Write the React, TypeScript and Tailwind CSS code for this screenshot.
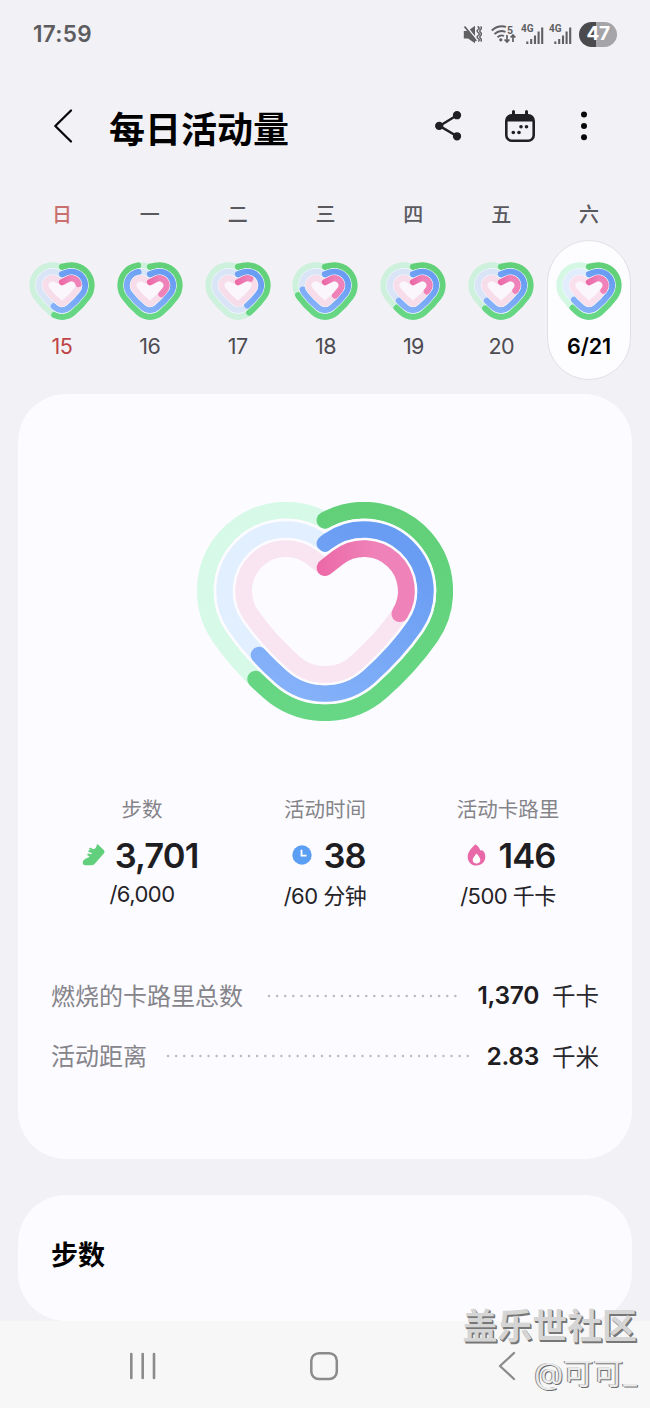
import React from "react";

type Geometry = {
  width: number;
  height: number;
  lobeDx: number;
  lobeY: number;
  tipY: number;
  stroke: number;
  rings: { r: number; tipR: number; startY: number }[];
};

const LARGE: Geometry = {
  width: 256,
  height: 219.4,
  lobeDx: 39,
  lobeY: 89,
  tipY: 125.7,
  stroke: 16.8,
  rings: [
    { r: 80.7, tipR: 85, startY: 18.3 },
    { r: 61.3, tipR: 65.7, startY: 41.5 },
    { r: 42.4, tipR: 46.8, startY: 65.7 },
  ],
};

const SMALL: Geometry = {
  width: 66,
  height: 58.4,
  lobeDx: 9.5,
  lobeY: 23.3,
  tipY: 37.8,
  stroke: 6.2,
  rings: [
    { r: 20, tipR: 17, startY: 4.9 },
    { r: 13.5, tipR: 10.3, startY: 12.3 },
    { r: 7.1, tipR: 3.8, startY: 20.2 },
  ],
};

// Closed heart: two lobe arcs and a rounded tip joined by slightly bowed sides.
function heartPath(g: Geometry, index: number) {
  const { r, tipR, startY } = g.rings[index];
  const cx = g.width / 2;
  const lx = g.lobeDx;
  const d = Math.hypot(lx, startY - g.lobeY);
  const startAngle = Math.atan2(startY - g.lobeY, -lx) + (d > r ? Math.acos(r / d) : 0);
  const ax = lx + r * Math.cos(startAngle);
  const ay = g.lobeY + r * Math.sin(startAngle);
  const vy = g.tipY - g.lobeY;
  const dist = Math.hypot(lx, vy);
  const theta = Math.atan2(vy, -lx) - Math.acos((r - tipR) / dist);
  const t0 = theta - 0.13;
  const t1 = theta + 0.11;
  const bx = lx + r * Math.cos(t0);
  const by = g.lobeY + r * Math.sin(t0);
  const tx = tipR * Math.cos(t1);
  const ty = g.tipY + tipR * Math.sin(t1);
  const h = Math.hypot(bx - tx, by - ty) * 0.34;
  const c0x = bx - h * Math.sin(t0);
  const c0y = by + h * Math.cos(t0);
  const c1x = tx + h * Math.sin(t1);
  const c1y = ty - h * Math.cos(t1);
  return [
    `M${cx} ${startY}`,
    `L${cx + ax} ${ay}`,
    `A${r} ${r} 0 0 1 ${cx + bx} ${by}`,
    `C${cx + c0x} ${c0y} ${cx + c1x} ${c1y} ${cx + tx} ${ty}`,
    `A${tipR} ${tipR} 0 0 1 ${cx - tx} ${ty}`,
    `C${cx - c1x} ${c1y} ${cx - c0x} ${c0y} ${cx - bx} ${by}`,
    `A${r} ${r} 0 0 1 ${cx - ax} ${ay}`,
    "Z",
  ].join(" ");
}

const LARGE_TRACKS = ["#d7f9e7", "#e2effe", "#f8e5f1"];
const SMALL_TRACKS = ["#cdf1dc", "#dae4f7", "#f7dce9"];
const SELECTED_TRACKS = ["#d5f8e4", "#e1edfd", "#fae0ec"];

function Heart({ values, large = false, selected = false, id }: { values: number[]; large?: boolean; selected?: boolean; id: string }) {
  const g = large ? LARGE : SMALL;
  const tracks = large ? LARGE_TRACKS : selected ? SELECTED_TRACKS : SMALL_TRACKS;
  return (
    <svg width={g.width} height={g.height} viewBox={`0 0 ${g.width} ${g.height}`} className="block shrink-0">
      <defs>
        <linearGradient id={`${id}-0`} x1="0" y1="1" x2="0" y2="0">
          <stop offset="0" stopColor="#67d785" />
          <stop offset="1" stopColor="#61d078" />
        </linearGradient>
        <linearGradient id={`${id}-1`} x1="0" y1="1" x2="0.7" y2="0">
          <stop offset="0" stopColor="#8ab5fa" />
          <stop offset="1" stopColor="#699df3" />
        </linearGradient>
        <linearGradient id={`${id}-2`} x1="0" y1="0" x2="1" y2="0">
          <stop offset="0.3" stopColor="#ea5d9f" />
          <stop offset="0.8" stopColor="#ef82b8" />
        </linearGradient>
      </defs>
      {g.rings.map((_, i) => {
        const d = heartPath(g, i);
        return (
          <g key={i} fill="none" strokeLinejoin="round" strokeLinecap="round">
            {i > 0 && <path d={d} stroke={large ? "#fcfbff" : "#eef8fb"} strokeWidth={g.stroke + (large ? 5 : 1.2)} />}
            <path d={d} stroke={tracks[i]} strokeWidth={g.stroke} fill={i === 2 && !large ? "#faf6fb" : "none"} />
            <path d={d} stroke={`url(#${id}-${i})`} strokeWidth={g.stroke} pathLength={100} strokeDasharray={`${values[i] * 100} 200`} />
          </g>
        );
      })}
    </svg>
  );
}

const DAYS = [
  { name: "日", date: "15", values: [0.545, 0.57, 0.215] },
  { name: "一", date: "16", values: [0.93, 0.91, 0.34] },
  { name: "二", date: "17", values: [0.43, 0.42, 0.14] },
  { name: "三", date: "18", values: [0.705, 0.735, 0.36] },
  { name: "四", date: "19", values: [0.61, 0.63, 0.3] },
  { name: "五", date: "20", values: [0.605, 0.63, 0.29] },
  { name: "六", date: "6/21", values: [0.61, 0.64, 0.29] },
];

function Signal() {
  return (
    <svg width="24" height="22" viewBox="0 0 24 22" className="block">
      <text x="0" y="9.3" fontFamily="Roboto, sans-serif" fontWeight="700" fontSize="10" fill="#606063">4G</text>
      <path d="M6.300 21v-2.400M10.200 21v-5M14 21v-8.500M17.600 21V8.500M21.200 21V4.500" stroke="#606063" strokeWidth="2.100" />
    </svg>
  );
}

function StatusBar() {
  return (
    <div className="flex h-[68px] items-center justify-between pr-[33px] pl-[33px]">
      <span className="text-[22.5px] font-semibold tracking-[0.3px] text-[#5d5d60]">17:59</span>
      <div className="flex items-center">
        <svg width="19" height="19" viewBox="0 0 19 19" className="mr-[9px]" fill="none" stroke="#606063">
          <path d="M.8 6h4L12 .8v17.400L5 13.500H.8z" fill="#606063" stroke="none" />
          <path d="M2.800.7l11 13.800" stroke="#f2f1f6" strokeWidth="1.500" />
          <path d="M1.500 1.500l11.800 14.500" strokeWidth="1.700" />
          <path d="M14.600 1.500q2.800 1.500.6 3t0 3 0 3 0 3 0 3M17.600 1.500q1.600 1.500 0 3t0 3 0 3 0 3 0 3" strokeWidth="1.500" />
        </svg>
        <svg width="26" height="20" viewBox="0 0 26 20" className="mr-1" fill="none" stroke="#606063" strokeWidth="1.900">
          <path d="M.8 6.500Q7 .8 15 2.800M3.500 10Q8.500 5.500 14.500 7.800M6.500 13.200Q9.700 10.300 13 12" />
          <circle cx="9.800" cy="15.800" r="1.600" fill="#606063" stroke="none" />
          <text x="16" y="9.500" fontFamily="Roboto, sans-serif" fontWeight="700" fontSize="10.500" fill="#606063" stroke="none">5</text>
          <path d="M16 11v7M13.600 15.500l2.400 2.600 2.400-2.600M22 18v-7M19.600 13.500l2.400-2.600 2.400 2.600" strokeWidth="1.700" />
        </svg>
        <div className="mr-[4px]"><Signal /></div>
        <div className="mr-[6px]"><Signal /></div>
        <div className="flex h-[25px] w-[38px] items-center justify-center rounded-full bg-linear-to-r from-[#4b4b4d] from-46% to-[#a5a4a8] to-46% text-[19px] font-bold tracking-[-0.4px] text-white">47</div>
      </div>
    </div>
  );
}

function Header() {
  return (
    <header className="flex h-[116px] items-center pl-[52px]">
      <svg width="22" height="36" viewBox="0 0 22 36" fill="none" stroke="#080808" strokeWidth="2.300" strokeLinecap="round" strokeLinejoin="round">
        <path d="M19 2.500L3.300 18 19 33.500" />
      </svg>
      <h1 className="ml-[35px] w-[289px] pt-[7px] text-[36px] leading-[44px] font-bold text-black">每日活动量</h1>
      <svg width="30" height="32" viewBox="0 0 30 32" className="ml-[35px]" fill="#202024" stroke="#202024" strokeWidth="2.400">
        <path d="M24 5.200L6.500 15.900 24 26.300" fill="none" />
        <circle cx="24" cy="5.200" r="3.300" strokeWidth="1.700" />
        <circle cx="6.200" cy="15.900" r="3.300" strokeWidth="1.700" />
        <circle cx="24" cy="26.300" r="3.300" strokeWidth="1.700" />
      </svg>
      <svg width="32" height="34" viewBox="0 0 32 34" className="ml-[41px]" fill="#202024">
        <path d="M9.500 2.500v5M22.500 2.500v5" stroke="#202024" strokeWidth="3" strokeLinecap="round" />
        <rect x="2.300" y="6.400" width="27.400" height="25.400" rx="5.500" fill="none" stroke="#202024" strokeWidth="2.600" />
        <path d="M2 12.500V10.500Q3 5.700 8 5.700h16q5 0 6 4.800v2z" />
        <circle cx="9.300" cy="23.500" r="1.800" /><circle cx="15" cy="23.500" r="1.800" />
        <circle cx="17" cy="17.800" r="1.800" /><circle cx="22.500" cy="17.800" r="1.800" />
      </svg>
      <svg width="8" height="32" viewBox="0 0 8 32" className="ml-[44px]" fill="#080808">
        <circle cx="4" cy="4.500" r="3" /><circle cx="4" cy="16" r="3" /><circle cx="4" cy="27.300" r="3" />
      </svg>
    </header>
  );
}

function Week() {
  return (
    <div className="grid h-[210px] grid-cols-7 pr-[17px] pl-[18px]">
      {DAYS.map((day, i) => {
        const selected = i === 6;
        return (
          <div key={day.date} className="flex flex-col items-center pt-[16px]">
            <div className={`h-[40px] text-[20px] leading-[30px] font-medium ${i === 0 ? "text-[#c96f6e]" : "text-[#59595e]"}`}>{day.name}</div>
            <div className={`flex h-[140px] w-[84px] flex-col items-center rounded-full border pt-[21px] ${selected ? "border-[#e1e0e6] bg-[#fdfcff]" : "border-transparent"}`}>
              <Heart id={`day${i}`} values={day.values} selected={selected} />
              <div
                className={`mt-[12px] text-[21.5px] leading-[28px] whitespace-nowrap ${
                  selected ? "font-semibold tracking-[-0.1px] text-black" : i === 0 ? "tracking-[-0.6px] text-[#bd4545]" : "tracking-[-0.6px] text-[#4c4b51]"
                }`}
              >
                {day.date}
              </div>
            </div>
          </div>
        );
      })}
    </div>
  );
}

function Shoe() {
  return (
    <svg width="24" height="24" viewBox="0 0 24 24" fill="#62cf7d">
      <path d="M14.800 1.500Q15.500.8 16.300 1.700L22 7.200Q23.200 8.700 22 10.300L13 20.400Q11.300 22.200 9 22.300H3.300Q.6 22 .7 19.500.9 17.200 3 16l3.700-1.700q1.100-.7.300-1.300L5.500 12.400Q4.600 11 6.300 10.600L9.500 11.200 9.900 9.900 6.600 9Q5.700 7.500 7.200 7.100L9 7.200 7 5.900Q7.200 4.400 8.500 4.800L11.300 6.200Q14.500 5.900 14.800 1.500z" />
    </svg>
  );
}

function Clock() {
  return (
    <svg width="20" height="20" viewBox="0 0 20 20">
      <circle cx="10" cy="10" r="9.700" fill="#5b9ff4" />
      <path d="M9.500 4.800v5.900h5" fill="none" stroke="#fff" strokeWidth="1.800" />
    </svg>
  );
}

function Flame() {
  return (
    <svg width="19" height="22" viewBox="0 0 19 22">
      <path d="M7.600.9Q8.500.2 9.400.9C11.700 2.600 12.700 4.400 13.200 6.600 14 6.200 14.500 6 15.200 6.300 17.500 7.800 18.300 10 18.300 12.800c0 5-3.800 8.700-8.800 8.700S.7 17.800.7 12.900C.7 7.500 4.500 4.300 7.600.9z" fill="#e968a8" />
      <path d="M9.500 9.500c2.200 2.700 3.800 4.500 3.800 6.500 0 2.100-1.600 3.600-3.800 3.600S5.700 18.100 5.700 16s1.900-3.800 3.800-6.500z" fill="#fff" />
    </svg>
  );
}

function Metric({ label, value, goal, icon, className, valueClass, goalClass }: { label: string; value: string; goal: string; icon: React.ReactNode; className: string; valueClass: string; goalClass: string }) {
  return (
    <div className={`flex flex-col items-center ${className}`}>
      <div className="text-[20.5px] leading-[30px] text-[#858489]">{label}</div>
      <div className={`mt-[10px] flex h-[42px] items-center ${valueClass}`}>
        <div className="-mt-[2px]">{icon}</div>
        <span className="text-[34.5px] leading-[42px] font-semibold tracking-[-0.9px] text-[#1e1d22]">{value}</span>
      </div>
      <div className={`text-[22px] leading-[30px] tracking-[-0.5px] whitespace-nowrap text-[#242328] ${goalClass}`}>{goal}</div>
    </div>
  );
}

function DetailRow({ label, value, unit, dotsClass }: { label: string; value: string; unit: string; dotsClass: string }) {
  return (
    <div className="flex h-[60.5px] items-center">
      <span className="pt-[2px] text-[24px] text-[#85848a]">{label}</span>
      <svg height="4" className={`min-w-0 flex-1 ${dotsClass}`}>
        <line x1="2" y1="2" x2="100%" y2="2" stroke="#bbbac0" strokeWidth="2.400" strokeLinecap="round" strokeDasharray="0.1 8" />
      </svg>
      <span className="text-[24.5px] font-semibold tracking-[-0.3px] text-[#1e1d22]">{value}</span>
      <span className="ml-[13px] pt-[2px] text-[23.5px] text-[#29282d]">{unit}</span>
    </div>
  );
}

export default function App() {
  return (
    <div className="relative flex h-[1408px] w-[650px] flex-col overflow-hidden bg-[#f2f1f6] font-[Inter,'Noto_Sans_CJK_SC',sans-serif]">
      <StatusBar />
      <Header />
      <Week />
      <main className="flex flex-1 flex-col gap-[36px] px-[18px]">
        <section className="flex h-[765px] flex-col rounded-[48px] bg-[#fcfbff] pt-[108px]">
          <div className="flex justify-center">
            <Heart id="today" values={[0.613, 0.635, 0.287]} large />
          </div>
          <div className="mt-[74px] flex pl-[31px]">
            <Metric label="步数" value="3,701" goal="/6,000" icon={<Shoe />} className="w-[186px]" valueClass="gap-[9px] pr-[4px]" goalClass="mt-[2px]" />
            <Metric label="活动时间" value="38" goal="/60 分钟" icon={<Clock />} className="w-[180px]" valueClass="gap-[11px] pl-[8px]" goalClass="mt-[4px]" />
            <Metric label="活动卡路里" value="146" goal="/500 千卡" icon={<Flame />} className="w-[186px]" valueClass="gap-[13px] pl-[6px]" goalClass="mt-[4px]" />
          </div>
          <div className="mt-[54px] pr-[33px] pl-[33px]">
            <DetailRow label="燃烧的卡路里总数" value="1,370" unit="千卡" dotsClass="mr-[17px] ml-[24px]" />
            <DetailRow label="活动距离" value="2.83" unit="千米" dotsClass="mr-[15px] ml-[19px]" />
          </div>
        </section>
        <section className="h-[126px] rounded-[48px] bg-[#fcfbff] pt-[41px] pl-[33px]">
          <h2 className="text-[27px] leading-[40px] font-bold text-black">步数</h2>
        </section>
      </main>
      <nav className="flex h-[87px] shrink-0 items-center bg-[#f7f7f7] pt-[2px] pl-[128px]">
        <svg width="28" height="30" viewBox="0 0 28 30" stroke="#8b8b8b" strokeWidth="2.600" strokeLinecap="round">
          <path d="M3.300 3v24M14.700 3v24M26 3v24" />
        </svg>
        <svg width="30" height="30" viewBox="0 0 30 30" className="ml-[153px]" fill="none" stroke="#8b8b8b" strokeWidth="2.500">
          <rect x="2.300" y="2.200" width="25.500" height="25.800" rx="7.500" />
        </svg>
        <svg width="20" height="30" viewBox="0 0 20 30" className="ml-[158px]" fill="none" stroke="#8b8b8b" strokeWidth="2.300" strokeLinecap="round" strokeLinejoin="round">
          <path d="M17 2L3 15l14 13" />
        </svg>
      </nav>
      <div className="absolute top-[1304px] right-[13px] flex flex-col items-end whitespace-nowrap">
        <div className="text-[35px] leading-[44px] font-bold tracking-[-0.1px] text-[#d5d5d5] [text-shadow:1px_1px_0_#777,1.5px_2px_0_#777]">盖乐世社区</div>
        <div className="mt-[3px] text-[30px] leading-[44px] text-[#eaeaea] [text-shadow:1px_1px_0_#6c6c6c,-1px_-0.5px_0_#8a8a8a]">@可可_</div>
      </div>
    </div>
  );
}
